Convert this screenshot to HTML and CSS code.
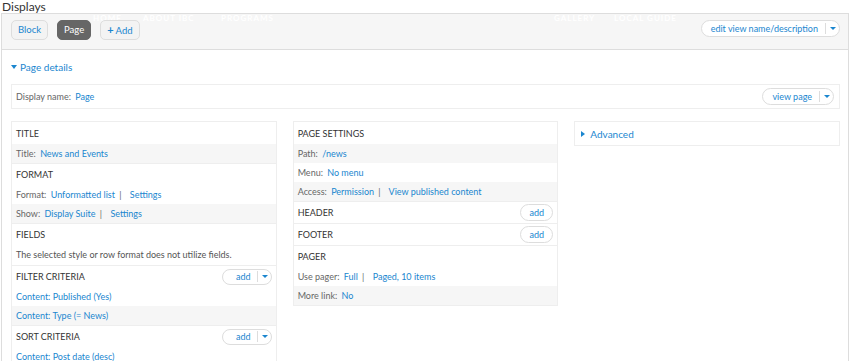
FILE: index.html
```html
<!DOCTYPE html>
<html lang="en">
<head>
  <meta charset="UTF-8">
  <title>Displays | Views</title>
  <link rel="stylesheet" href="styles.css">
</head>
<body>

  <h1 class="page-title">Displays</h1>

  <div class="views-display">

    <div class="display-top">
      <!-- site menu showing through the overlay -->
      <div class="ghost-nav">
        <span class="nav-home">HOME</span>
        <span class="nav-about">ABOUT IBC</span>
        <span class="nav-programs">PROGRAMS</span>
        <span class="nav-gallery">GALLERY</span>
        <span class="nav-guide">LOCAL GUIDE</span>
      </div>

      <div class="tabs">
        <a class="tab" href="#">Block</a>
        <a class="tab active" href="#">Page</a>
        <a class="tab" href="#"><b>+</b>Add</a>
      </div>

      <span class="dropbutton wide">
        <a href="#">edit view name/description</a><span class="drop-arrow"></span>
      </span>
    </div>

    <div class="display-body">
      <a class="details-toggle" href="#"><span class="caret-down"></span>Page details</a>

      <div class="display-name">
        <span><span class="label">Display name:</span> <a href="#">Page</a></span>
        <span class="dropbutton">
          <a href="#">view page</a><span class="drop-arrow"></span>
        </span>
      </div>

      <div class="columns">

        <div class="column">
          <div class="bucket">
            <h3>Title</h3>
            <div class="row grey"><span class="label">Title:</span> <a href="#">News and Events</a></div>
          </div>
          <div class="bucket">
            <h3>Format</h3>
            <div class="row"><span class="label">Format:</span> <a href="#">Unformatted list</a> <span class="sep">|</span> <a href="#">Settings</a></div>
            <div class="row grey"><span class="label">Show:</span> <a href="#">Display Suite</a> <span class="sep">|</span> <a href="#">Settings</a></div>
          </div>
          <div class="bucket">
            <h3>Fields</h3>
            <div class="row note">The selected style or row format does not utilize fields.</div>
          </div>
          <div class="bucket">
            <h3>Filter criteria
              <span class="dropbutton small"><a href="#">add</a><span class="drop-arrow"></span></span>
            </h3>
            <div class="row"><a href="#">Content: Published (Yes)</a></div>
            <div class="row grey"><a href="#">Content: Type (= News)</a></div>
          </div>
          <div class="bucket">
            <h3>Sort criteria
              <span class="dropbutton small"><a href="#">add</a><span class="drop-arrow"></span></span>
            </h3>
            <div class="row"><a href="#">Content: Post date (desc)</a></div>
          </div>
        </div>

        <div class="column">
          <div class="bucket">
            <h3>Page settings</h3>
            <div class="row grey"><span class="label">Path:</span> <a href="#">/news</a></div>
            <div class="row"><span class="label">Menu:</span> <a href="#">No menu</a></div>
            <div class="row grey"><span class="label">Access:</span> <a href="#">Permission</a> <span class="sep">|</span> <a href="#">View published content</a></div>
          </div>
          <div class="bucket">
            <h3>Header <a class="add-button" href="#">add</a></h3>
          </div>
          <div class="bucket">
            <h3>Footer <a class="add-button" href="#">add</a></h3>
          </div>
          <div class="bucket">
            <h3>Pager</h3>
            <div class="row"><span class="label">Use pager:</span> <a href="#">Full</a> <span class="sep">|</span> <a href="#">Paged, 10 items</a></div>
            <div class="row grey"><span class="label">More link:</span> <a href="#">No</a></div>
          </div>
        </div>

        <div class="column advanced">
          <a class="details-toggle" href="#"><span class="caret-right"></span>Advanced</a>
        </div>

      </div>
    </div>
  </div>

</body>
</html>
```

FILE: styles.css
```css
/* General Reset */
* {
  margin: 0;
  padding: 0;
  box-sizing: border-box;
}

body {
  font-family: 'Lato', 'Open Sans', sans-serif;
  font-size: 9px;
  color: #333;
  background: #fff;
  overflow: hidden;
}

a {
  color: #1a86cf;
  text-decoration: none;
}

.label {
  color: #666;
  margin-right: 2px;
}

.sep {
  color: #666;
  margin: 0 6px 0 2px;
}

.page-title {
  font-size: 12px;
  font-weight: normal;
  line-height: 13px;
  padding-left: 2px;
  color: #333;
}

/* Display box */
.views-display {
  border: 1px solid #ddd;
  border-bottom: none;
  margin-left: 1px;
  margin-right: 1px;
}

.display-top {
  position: relative;
  height: 36px;
  display: flex;
  align-items: flex-start;
  justify-content: space-between;
  padding: 6px 8px 0 9px;
  background: #f6f6f6;
  border-bottom: 1px solid #ddd;
}

.ghost-nav {
  position: absolute;
  top: 0;
  left: 0;
}

.ghost-nav span {
  position: absolute;
  top: -1px;
  color: #fff;
  font-weight: bold;
  font-size: 8px;
  letter-spacing: 1px;
  white-space: nowrap;
}

.nav-home { left: 91px; }
.nav-about { left: 141px; }
.nav-programs { left: 219px; }
.nav-gallery { left: 552px; }
.nav-guide { left: 612px; }

.tabs {
  display: flex;
  gap: 9px;
  position: relative;
}

.tab {
  display: inline-block;
  height: 20px;
  line-height: 18px;
  padding: 0 6px;
  font-size: 9.5px;
  border: 1px solid #ddd;
  border-radius: 5px;
  background: #f3f3f3;
}

.tab.active {
  background: #666;
  border-color: #666;
  color: #fff;
}

.tab b {
  font-size: 11px;
  margin-right: 2px;
}

/* Dropbuttons */
.dropbutton {
  display: inline-flex;
  align-items: center;
  height: 17px;
  border: 1px solid #ddd;
  border-radius: 9px;
  background: #fff;
  font-weight: normal;
  text-transform: none;
}

.dropbutton a {
  padding: 0 7px 0 9px;
  line-height: 15px;
}

.dropbutton.wide {
  position: relative;
}

.drop-arrow {
  width: 14px;
  height: 11px;
  border-left: 1px solid #ddd;
  position: relative;
}

.drop-arrow::after {
  content: '';
  position: absolute;
  left: 4px;
  top: 4px;
  border-left: 3px solid transparent;
  border-right: 3px solid transparent;
  border-top: 3px solid #1a86cf;
}

.dropbutton.small {
  height: 16px;
}

.dropbutton.small a {
  padding: 0 6px 0 13px;
}

.add-button {
  display: inline-block;
  width: 33px;
  height: 17px;
  line-height: 15px;
  text-align: center;
  border: 1px solid #ddd;
  border-radius: 9px;
  background: #fff;
  font-weight: normal;
  text-transform: none;
}

/* Body */
.display-body {
  padding: 11px 8px 0 9px;
}

.details-toggle {
  display: flex;
  align-items: center;
  font-size: 10px;
  line-height: 12px;
}

.caret-down {
  display: inline-block;
  margin-right: 3px;
  border-left: 3.5px solid transparent;
  border-right: 3.5px solid transparent;
  border-top: 4px solid #1a86cf;
}

.caret-right {
  display: inline-block;
  margin-right: 5px;
  border-top: 3.5px solid transparent;
  border-bottom: 3.5px solid transparent;
  border-left: 4px solid #1a86cf;
}

.display-name {
  margin-top: 11px;
  height: 25px;
  display: flex;
  align-items: center;
  justify-content: space-between;
  padding: 0 5px 0 4px;
  border: 1px solid #eee;
}

.columns {
  margin-top: 12px;
  display: grid;
  grid-template-columns: repeat(3, 1fr);
  gap: 16px;
  align-items: start;
}

.column {
  border: 1px solid #eee;
}

.bucket + .bucket {
  border-top: 1px solid #eee;
}

.bucket h3 {
  height: 21px;
  display: flex;
  align-items: center;
  justify-content: space-between;
  padding: 0 4px 0 4px;
  font-size: 9px;
  font-weight: normal;
  text-transform: uppercase;
  color: #333;
}

.bucket:first-child h3 {
  height: 22px;
}

.row {
  height: 19px;
  line-height: 19px;
  padding: 0 4px;
  white-space: nowrap;
}

.row.grey {
  background: #f6f6f6;
}

.row.note {
  height: 20px;
  color: #555;
}

.advanced {
  height: 25px;
  display: flex;
  align-items: center;
  padding-left: 6px;
}
```
